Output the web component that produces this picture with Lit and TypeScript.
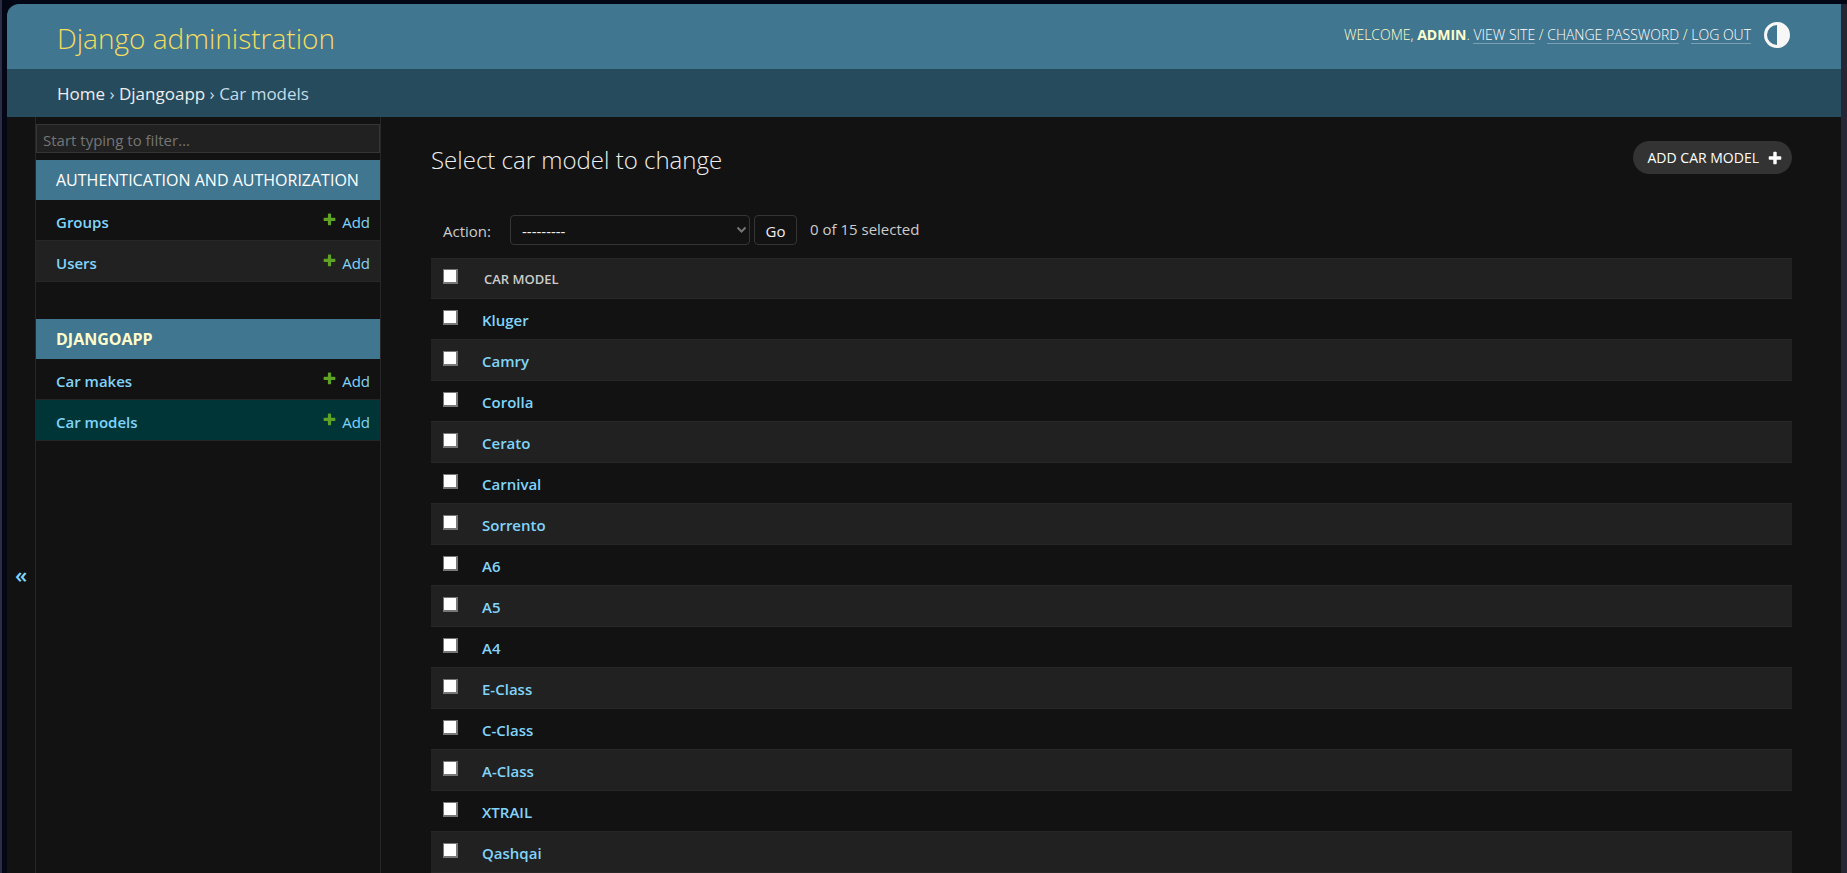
import { LitElement, html, css, svg } from "lit";
import { customElement, property } from "lit/decorators.js";

const PLUS =
  "M1600 796v192q0 40-28 68t-68 28h-416v416q0 40-28 68t-68 28h-192q-40 0-68-28t-28-68v-416h-416q-40 0-68-28t-28-68v-192q0-40 28-68t68-28h416v-416q0-40 28-68t68-28h192q40 0 68 28t28 68v416h416q40 0 68 28t28 68z";

const plusIcon = (cls: string) => html`<svg class=${cls} viewBox="0 0 1792 1792" aria-hidden="true">${svg`<path d=${PLUS}></path>`}</svg>`;

@customElement("nav-sidebar")
class NavSidebar extends LitElement {
  @property() current = "";

  private sections = [
    { name: "Authentication and Authorization", active: false, models: ["Groups", "Users"] },
    { name: "Djangoapp", active: true, models: ["Car makes", "Car models"] },
  ];

  static styles = css`
    :host {
      display: flex;
      flex: none;
    }
    .toggle {
      box-sizing: border-box;
      width: 29px;
      border: 0;
      border-right: 1px solid #272727;
      margin: 0;
      padding: 158px 0 0;
      background: none;
      color: #81d4fa;
      font: 600 22px/24px "Open Sans", sans-serif;
      cursor: pointer;
      text-align: center;
    }
    .panel {
      width: 344px;
      border-right: 1px solid #272727;
      padding-top: 7px;
    }
    .filter {
      display: block;
      box-sizing: border-box;
      width: 100%;
      height: 29px;
      margin: 0 0 7px;
      padding: 3px 6px 0;
      border: 1px solid #353535;
      background: #212121;
      color: #eee;
      font: 15px/20px "Open Sans", sans-serif;
      outline: none;
    }
    .filter::placeholder {
      color: #757575;
      opacity: 1;
    }
    table {
      width: 100%;
      border-collapse: separate;
      border-spacing: 0;
      margin-bottom: 37px;
    }
    caption {
      height: 40px;
      padding: 0 20px;
      box-sizing: border-box;
      background: #417690;
      text-align: left;
      text-transform: uppercase;
      white-space: nowrap;
      font-size: 16px;
      line-height: 40px;
    }
    caption a {
      color: #fff;
      text-decoration: none;
    }
    .active caption a {
      color: #ffc;
      font-weight: 700;
    }
    tr:nth-child(even) {
      background: #212121;
    }
    tr.current {
      background: #003538;
    }
    th,
    td {
      height: 41px;
      padding: 3px 0 0;
      box-sizing: border-box;
      line-height: 20px;
      border-bottom: 1px solid #272727;
    }
    th {
      padding-left: 20px;
      text-align: left;
      font-weight: 600;
    }
    td {
      padding-right: 10px;
      text-align: right;
    }
    td a,
    th a {
      color: #81d4fa;
      text-decoration: none;
    }
    .add {
      display: inline-flex;
      gap: 5px;
      vertical-align: top;
    }
    .plus {
      width: 15px;
      height: 15px;
      fill: #5fa225;
    }
  `;

  render() {
    return html`
      <button class="toggle" aria-label="Toggle navigation">«</button>
      <nav class="panel" aria-label="Sidebar">
        <input class="filter" type="search" placeholder="Start typing to filter…" aria-label="Filter navigation items" />
        ${this.sections.map(
          (s) => html`<div class=${s.active ? "active" : ""}>
            <table>
              <caption><a href="#">${s.name}</a></caption>
              <tbody>
                ${s.models.map(
                  (m) => html`<tr class=${m === this.current ? "current" : ""}>
                    <th scope="row"><a href="#">${m}</a></th>
                    <td><a class="add" href="#">${plusIcon("plus")}Add</a></td>
                  </tr>`
                )}
              </tbody>
            </table>
          </div>`
        )}
      </nav>
    `;
  }
}

@customElement("change-list")
class ChangeList extends LitElement {
  private cars = [
    "Kluger", "Camry", "Corolla", "Cerato", "Carnival", "Sorrento", "A6",
    "A5", "A4", "E-Class", "C-Class", "A-Class", "XTRAIL", "Qashqai",
  ];

  static styles = css`
    :host {
      display: block;
      flex: 1;
      min-width: 0;
      padding: 24px 49px 0 50px;
    }
    .top {
      display: flex;
      justify-content: space-between;
      align-items: flex-start;
      height: 74px;
    }
    h1 {
      margin: 0;
      font-size: 24px;
      line-height: 38px;
      font-weight: 300;
      color: #eee;
    }
    .add {
      display: flex;
      align-items: center;
      gap: 8px;
      height: 33px;
      box-sizing: border-box;
      padding: 0 9px 0 15px;
      border-radius: 17px;
      background: #333;
      color: #fff;
      font-size: 14px;
      text-transform: uppercase;
      text-decoration: none;
    }
    .plus {
      width: 16px;
      height: 16px;
      fill: #fff;
    }
    .actions {
      display: flex;
      align-items: center;
      height: 30px;
      padding-left: 12px;
      margin-bottom: 13px;
      color: #ccc;
    }
    .actions label {
      width: 67px;
      padding-top: 2px;
      box-sizing: border-box;
    }
    .pick {
      position: relative;
      display: flex;
      margin-right: 4px;
    }
    .pick select {
      appearance: none;
      width: 240px;
      height: 30px;
      margin: 0;
      padding: 2px 10px 0 11px;
      border: 1px solid #353535;
      border-radius: 4px;
      background: #121212;
      color: #eee;
      font: 15px/20px "Open Sans", sans-serif;
    }
    .chevron {
      position: absolute;
      right: 4px;
      top: 11px;
      width: 9px;
      height: 8px;
      fill: none;
      stroke: #757575;
      stroke-width: 2;
      pointer-events: none;
    }
    .go {
      width: 43px;
      height: 30px;
      box-sizing: border-box;
      margin: 0 13px 0 0;
      padding: 2px 0 0;
      border: 1px solid #353535;
      border-radius: 4px;
      background: #121212;
      color: #eee;
      font: 15px/20px "Open Sans", sans-serif;
    }
    .count {
      padding-bottom: 2px;
    }
    table {
      width: 100%;
      border-collapse: separate;
      border-spacing: 0;
    }
    th,
    td {
      height: 41px;
      box-sizing: border-box;
      padding: 0;
      border-bottom: 1px solid #272727;
      text-align: left;
      vertical-align: middle;
    }
    tr > :first-child {
      width: 51px;
      padding-left: 12px;
      vertical-align: top;
      padding-top: 11px;
    }
    tr > :last-child {
      padding-top: 1px;
    }
    tbody th {
      font-weight: 600;
      line-height: 20px;
    }
    thead th {
      font-size: 13px;
      font-weight: 600;
      color: #ccc;
      background: #212121;
      border-top: 1px solid #272727;
    }
    thead tr > :first-child {
      padding-top: 10px;
    }
    thead th:last-child {
      padding-left: 2px;
    }
    tbody tr:nth-child(even) {
      background: #212121;
    }
    tbody a {
      color: #81d4fa;
      text-decoration: none;
    }
    input {
      appearance: none;
      display: block;
      width: 15px;
      height: 15px;
      box-sizing: border-box;
      margin: 0;
      border: solid #767676;
      border-width: 1px 2px 2px 1px;
      background: #fff;
    }
  `;

  render() {
    return html`
      <div class="top">
        <h1>Select car model to change</h1>
        <a class="add" href="#">Add car model ${plusIcon("plus")}</a>
      </div>
      <form class="actions">
        <label for="action">Action:</label>
        <div class="pick">
          <select id="action">
            <option>---------</option>
          </select>
          <svg class="chevron" viewBox="0 0 9 8" aria-hidden="true"><path d="M0.5 1.5L4.5 5.5L8.5 1.5" /></svg>
        </div>
        <button class="go" type="button">Go</button>
        <span class="count">0 of 15 selected</span>
      </form>
      <table>
        <thead>
          <tr>
            <th scope="col"><input type="checkbox" aria-label="Select all car models" /></th>
            <th scope="col">CAR MODEL</th>
          </tr>
        </thead>
        <tbody>
          ${this.cars.map(
            (c) => html`<tr>
              <td><input type="checkbox" aria-label=${`Select ${c}`} /></td>
              <th scope="row"><a href="#">${c}</a></th>
            </tr>`
          )}
        </tbody>
      </table>
    `;
  }
}

@customElement("app-root")
class AppRoot extends LitElement {
  static styles = css`
    :host {
      display: flex;
      box-sizing: border-box;
      min-height: 100vh;
      padding: 4px 0 0 5px;
      border-left: 2px solid #2b2d45;
      background: #030614;
      color: #eee;
      font: 15px/20px "Open Sans", sans-serif;
    }
    .page {
      flex: 1;
      min-width: 0;
      display: flex;
      flex-direction: column;
      border-right: 6px solid #252834;
      border-top-left-radius: 12px;
      background: #121212;
      overflow: hidden;
    }
    header {
      display: flex;
      justify-content: space-between;
      height: 65px;
      padding: 0 51px 0 50px;
      background: #417690;
    }
    .brand {
      color: #f5dd5d;
      font-size: 28px;
      font-weight: 300;
      line-height: 68px;
      text-decoration: none;
    }
    .tools {
      display: flex;
      align-items: center;
      height: 62px;
      gap: 13px;
      color: #ffc;
      font-size: 14px;
      font-weight: 300;
      line-height: 16px;
      text-transform: uppercase;
    }
    .tools strong {
      font-weight: 700;
    }
    .tools span a {
      display: inline-block;
      color: #fff;
      text-decoration: none;
      border-bottom: 1px solid #7a9fb1;
    }
    .theme {
      width: 26px;
      height: 26px;
      padding: 0;
      border: 0;
      background: none;
      display: flex;
    }
    .theme svg {
      width: 26px;
      height: 26px;
      fill: #f7f7f7;
    }
    .crumbs {
      height: 48px;
      padding: 0 50px;
      background: #264b5d;
      color: #c4dce8;
      font-size: 17px;
      line-height: 50px;
    }
    .crumbs a {
      color: #eee;
      text-decoration: none;
    }
    .main {
      flex: 1;
      display: flex;
    }
  `;

  render() {
    return html`
      <div class="page">
        <header>
          <a class="brand" href="#">Django administration</a>
          <div class="tools">
            <span>Welcome, <strong>admin</strong>. <a href="#">View site</a> / <a href="#">Change password</a> / <a href="#">Log out</a></span>
            <button class="theme" aria-label="Toggle theme">
              <svg viewBox="0 0 26 26" aria-hidden="true">
                <path fill-rule="evenodd" d="M13 0A13 13 0 1 1 13 26A13 13 0 1 1 13 0ZM13 3A10 10 0 0 0 13 23Z" />
              </svg>
            </button>
          </div>
        </header>
        <nav class="crumbs" aria-label="Breadcrumbs">
          <a href="#">Home</a> › <a href="#">Djangoapp</a> › Car models
        </nav>
        <div class="main">
          <nav-sidebar current="Car models"></nav-sidebar>
          <change-list></change-list>
        </div>
      </div>
    `;
  }
}
